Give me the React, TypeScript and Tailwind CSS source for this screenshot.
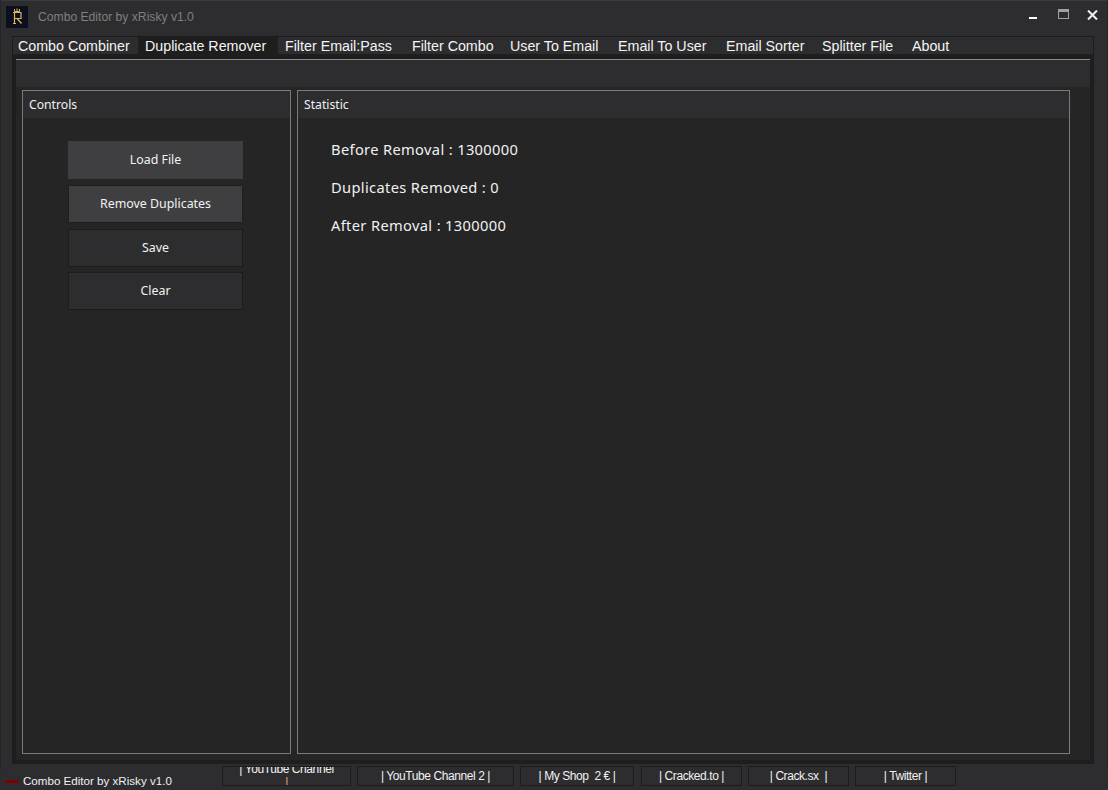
import React from "react";

const tabs: [string, number, string][] = [
  ["Combo Combiner", 125, "pl-[5px]"],
  ["Duplicate Remover", 140, "pl-[7px] bg-[#1e1e1e]"],
  ["Filter Email:Pass", 127, "pl-[7px]"],
  ["Filter Combo", 98, "pl-[7px]"],
  ["User To Email", 108, "pl-[7px]"],
  ["Email To User", 108, "pl-[7px]"],
  ["Email Sorter", 96, "pl-[7px]"],
  ["Splitter File", 90, "pl-[7px]"],
  ["About", 60, "pl-[7px]"],
];

const links: [string, number, number][] = [
  ["| YouTube Channel 2 |", 157, 6],
  ["| My Shop  2 € |", 114, 6],
  ["| Cracked.to |", 101, 7],
  ["| Crack.sx  |", 101, 6],
  ["| Twitter |", 101, 6],
];

function Panel({ title, className, children }: { title: string; className: string; children: React.ReactNode }) {
  return (
    <div className={`flex flex-col border border-[#7a7a7a] bg-[#252526] ${className}`}>
      <div className="flex h-[27px] shrink-0 items-center bg-[#2d2d30] pl-[6px] pt-[1px] text-[12.2px] text-[#f1f1f1] [font-family:'Noto_Sans',sans-serif]">
        {title}
      </div>
      {children}
    </div>
  );
}

function Btn({ label, className }: { label: string; className: string }) {
  return (
    <div
      className={`flex h-[38px] w-[175px] items-center justify-center border text-[12.4px] text-[#f1f1f1] [font-family:'Noto_Sans',sans-serif] ${className}`}
    >
      {label}
    </div>
  );
}

export default function App() {
  return (
    <div className="relative flex h-[790px] w-[1108px] flex-col overflow-hidden bg-[#2d2d30] [font-family:'Liberation_Sans',sans-serif]">
      {/* window edges */}
      <div className="absolute left-0 top-0 h-[769px] w-px bg-[#252526]" />
      <div className="absolute right-0 top-0 h-[769px] w-px bg-[#252526]" />

      {/* Title bar */}
      <div className="flex h-[36px] shrink-0 items-start border-t border-[#3a3a3c]">
        <div className="ml-[6px] mt-[5px] flex h-[22px] w-[22px] items-start justify-center bg-[#0c0f1c]">
          <svg width="22" height="22" viewBox="0 0 22 22" fill="none" stroke="#d9b95c" strokeWidth="1">
            <path d="M8.5 3v2.5h5V3M11 2.5v3" />
            <path d="M7 6.5h8.5M8.5 17.5V7M7 17.5h3M8.5 12.5h6.5V7M11 12.5l4.5 5" strokeWidth="1.2" />
          </svg>
        </div>
        <span className="ml-[10px] mt-[8px] text-[12.15px] leading-[16px] text-[#7f7f7f]">Combo Editor by xRisky v1.0</span>
        <div className="ml-auto mr-[10px] mt-[8px] flex items-start">
          <div className="mt-[8px] h-[2px] w-[8px] bg-white" />
          <div className="ml-[21px] h-[10px] w-[11px] border border-t-[3px] border-[#a0a0a0]" />
          <svg className="ml-[18px] mt-[1px]" width="11" height="10" viewBox="0 0 11 10" stroke="#f2f2f2" strokeWidth="2">
            <path d="M1 .5l9 9M10 .5l-9 9" />
          </svg>
        </div>
      </div>

      {/* Tab control */}
      <div className="ml-[12px] mr-[14px] flex h-[728px] shrink-0 flex-col border-l border-t border-r border-[#1c1c1c]">
        <div className="flex h-[17px] shrink-0 items-center">
          {tabs.map(([t, w, c]) => (
            <div
              key={t}
              style={{ width: w }}
              className={`flex h-full items-center pt-[1px] text-[14.25px] leading-none text-[#f4f4f4] ${c}`}
            >
              {t}
            </div>
          ))}
        </div>
        <div className="flex grow flex-col bg-[#1e1e1e] pb-[4px] pl-[3px] pr-[3px] pt-[5px]">
          <div className="flex grow flex-col border-t border-[#8a8a8a] bg-[#2d2d30]">
            <div className="h-[27px] shrink-0" />
            <div className="flex grow gap-[6px] bg-[#252526] pb-[6px] pl-[6px] pt-[3px]">
              <Panel title="Controls" className="w-[269px]">
                <div className="flex flex-col items-center gap-[6px] pr-[2px] pt-[23px]">
                  <Btn label="Load File" className="border-[#3f3f41] bg-[#3f3f41]" />
                  <Btn label="Remove Duplicates" className="border-[#1f1f1f] bg-[#3f3f41]" />
                  <Btn label="Save" className="border-[#1c1c1c] bg-[#2d2d30]" />
                  <Btn label="Clear" className="-mt-px border-[#1c1c1c] bg-[#2d2d30]" />
                </div>
              </Panel>
              <Panel title="Statistic" className="w-[773px]">
                <div className="flex flex-col gap-[19px] pl-[33px] pt-[22px] text-[14.67px] leading-[19px] tracking-[0.35px] text-[#f1f1f1] [font-family:'Noto_Sans',sans-serif]">
                  <div>Before Removal : 1300000</div>
                  <div>Duplicates Removed : 0</div>
                  <div>After Removal : 1300000</div>
                </div>
              </Panel>
            </div>
          </div>
        </div>
      </div>

      {/* Footer */}
      <div className="flex grow items-start pt-[2px]">
        <div className="ml-[5px] mt-[14px] h-[3px] w-[14px] shrink-0 bg-[#800000]" />
        <span className="ml-[4px] mt-[7px] w-[199px] shrink-0 text-[11.6px] leading-[16px] text-[#f1f1f1]">Combo Editor by xRisky v1.0</span>
        <div className="flex h-[20px] w-[129px] shrink-0 justify-center overflow-hidden border border-[#1c1c1c] text-[12px] leading-[13px] tracking-[-0.42px] text-[#f1f1f1]">
          <span className="-mt-[4px] h-[26px] w-[97px] shrink-0 text-center">
            | YouTube Channel <span className="text-[#e0a860]">|</span>
          </span>
        </div>
        {links.map(([t, w, m]) => (
          <div
            key={t}
            style={{ width: w, marginLeft: m }}
            className="flex h-[20px] shrink-0 items-center justify-center whitespace-pre border border-[#1c1c1c] text-[12px] tracking-[-0.42px] text-[#f1f1f1]"
          >
            {t}
          </div>
        ))}
      </div>
    </div>
  );
}
